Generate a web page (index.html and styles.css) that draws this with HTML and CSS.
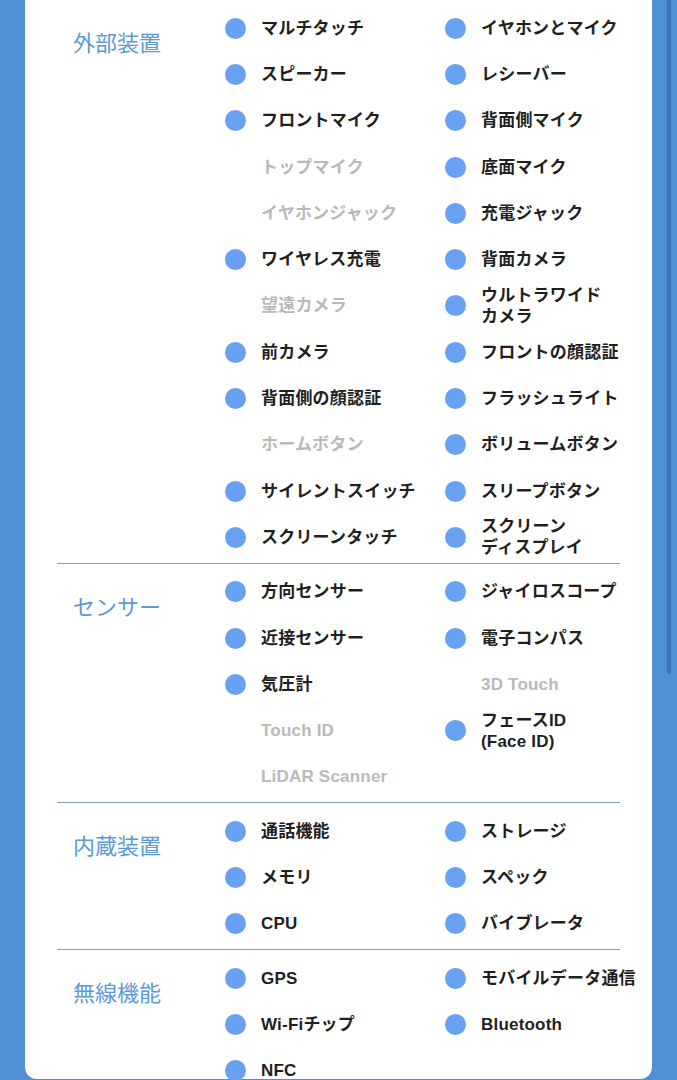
FILE: index.html
```html
<!DOCTYPE html>
<html lang="ja">
<head>
<meta charset="utf-8">
<link rel="stylesheet" href="styles.css">
</head>
<body>
<div class="page">
  <div class="card">
    <section class="section first">
      <h2 class="heading">外部装置</h2>
      <div class="items">
        <div class="item"><span class="dot"></span><span class="label">マルチタッチ</span></div>
        <div class="item"><span class="dot"></span><span class="label">イヤホンとマイク</span></div>
        <div class="item"><span class="dot"></span><span class="label">スピーカー</span></div>
        <div class="item"><span class="dot"></span><span class="label">レシーバー</span></div>
        <div class="item"><span class="dot"></span><span class="label">フロントマイク</span></div>
        <div class="item"><span class="dot"></span><span class="label">背面側マイク</span></div>
        <div class="item off"><span class="dot"></span><span class="label">トップマイク</span></div>
        <div class="item"><span class="dot"></span><span class="label">底面マイク</span></div>
        <div class="item off"><span class="dot"></span><span class="label">イヤホンジャック</span></div>
        <div class="item"><span class="dot"></span><span class="label">充電ジャック</span></div>
        <div class="item"><span class="dot"></span><span class="label">ワイヤレス充電</span></div>
        <div class="item"><span class="dot"></span><span class="label">背面カメラ</span></div>
        <div class="item off"><span class="dot"></span><span class="label">望遠カメラ</span></div>
        <div class="item"><span class="dot"></span><span class="label">ウルトラワイド<br>カメラ</span></div>
        <div class="item"><span class="dot"></span><span class="label">前カメラ</span></div>
        <div class="item"><span class="dot"></span><span class="label">フロントの顔認証</span></div>
        <div class="item"><span class="dot"></span><span class="label">背面側の顔認証</span></div>
        <div class="item"><span class="dot"></span><span class="label">フラッシュライト</span></div>
        <div class="item off"><span class="dot"></span><span class="label">ホームボタン</span></div>
        <div class="item"><span class="dot"></span><span class="label">ボリュームボタン</span></div>
        <div class="item"><span class="dot"></span><span class="label">サイレントスイッチ</span></div>
        <div class="item"><span class="dot"></span><span class="label">スリープボタン</span></div>
        <div class="item"><span class="dot"></span><span class="label">スクリーンタッチ</span></div>
        <div class="item"><span class="dot"></span><span class="label">スクリーン<br>ディスプレイ</span></div>
      </div>
    </section>
    <section class="section">
      <h2 class="heading">センサー</h2>
      <div class="items">
        <div class="item"><span class="dot"></span><span class="label">方向センサー</span></div>
        <div class="item"><span class="dot"></span><span class="label">ジャイロスコープ</span></div>
        <div class="item"><span class="dot"></span><span class="label">近接センサー</span></div>
        <div class="item"><span class="dot"></span><span class="label">電子コンパス</span></div>
        <div class="item"><span class="dot"></span><span class="label">気圧計</span></div>
        <div class="item off"><span class="dot"></span><span class="label">3D Touch</span></div>
        <div class="item off"><span class="dot"></span><span class="label">Touch ID</span></div>
        <div class="item"><span class="dot"></span><span class="label">フェースID<br>(Face ID)</span></div>
        <div class="item off"><span class="dot"></span><span class="label">LiDAR Scanner</span></div>
        <div class="item empty"></div>
      </div>
    </section>
    <section class="section">
      <h2 class="heading">内蔵装置</h2>
      <div class="items">
        <div class="item"><span class="dot"></span><span class="label">通話機能</span></div>
        <div class="item"><span class="dot"></span><span class="label">ストレージ</span></div>
        <div class="item"><span class="dot"></span><span class="label">メモリ</span></div>
        <div class="item"><span class="dot"></span><span class="label">スペック</span></div>
        <div class="item"><span class="dot"></span><span class="label">CPU</span></div>
        <div class="item"><span class="dot"></span><span class="label">バイブレータ</span></div>
      </div>
    </section>
    <section class="section">
      <h2 class="heading">無線機能</h2>
      <div class="items">
        <div class="item"><span class="dot"></span><span class="label">GPS</span></div>
        <div class="item"><span class="dot"></span><span class="label">モバイルデータ通信</span></div>
        <div class="item"><span class="dot"></span><span class="label">Wi-Fiチップ</span></div>
        <div class="item"><span class="dot"></span><span class="label">Bluetooth</span></div>
        <div class="item"><span class="dot"></span><span class="label">NFC</span></div>
      </div>
    </section>
  </div>
  <div class="scrollbar"></div>
</div>
</body>
</html>
```

FILE: styles.css
```css
html, body {
  margin: 0;
  padding: 0;
}
body {
  background: #4f8fd6;
  width: 677px;
  height: 1080px;
  overflow: hidden;
  font-family: "Liberation Sans", "Noto Sans CJK JP", sans-serif;
}
.page {
  position: relative;
  padding-left: 25px;
  width: 627px;
}
.card {
  background: #ffffff;
  border-top: 1px solid #e6e6e6;
  margin-top: -1px;
  border-radius: 0 0 12px 12px;
  padding: 0 32px 20px;
  height: 1059px;
}
.section {
  display: flex;
  border-top: 1px solid #7aa3c9;
  padding: 5px 0 2px;
}
.section.first {
  border-top: none;
}
.heading {
  width: 168px;
  flex: none;
  box-sizing: border-box;
  margin: 21px 0 0;
  padding-left: 16px;
  font-size: 22px;
  line-height: 30px;
  font-weight: 400;
  color: #5b9ad4;
  font-family: "Noto Sans CJK JP", sans-serif;
}
.items {
  display: grid;
  grid-template-columns: 220px 220px;
  grid-auto-rows: 46.3px;
}
.item {
  display: flex;
  align-items: center;
  gap: 15px;
  white-space: nowrap;
}
.dot {
  width: 21px;
  height: 21px;
  border-radius: 50%;
  background: #69a1f2;
  flex: none;
}
.label {
  font-size: 17px;
  line-height: 21px;
  font-weight: 700;
  color: #1f1f1f;
  letter-spacing: 0.2px;
}
.item.off .dot {
  visibility: hidden;
}
.item.off .label {
  color: #b9b9b9;
}
.scrollbar {
  position: absolute;
  left: 667px;
  top: 0;
  width: 4px;
  height: 675px;
  border-radius: 2px;
  background: #3c73b7;
}
```
